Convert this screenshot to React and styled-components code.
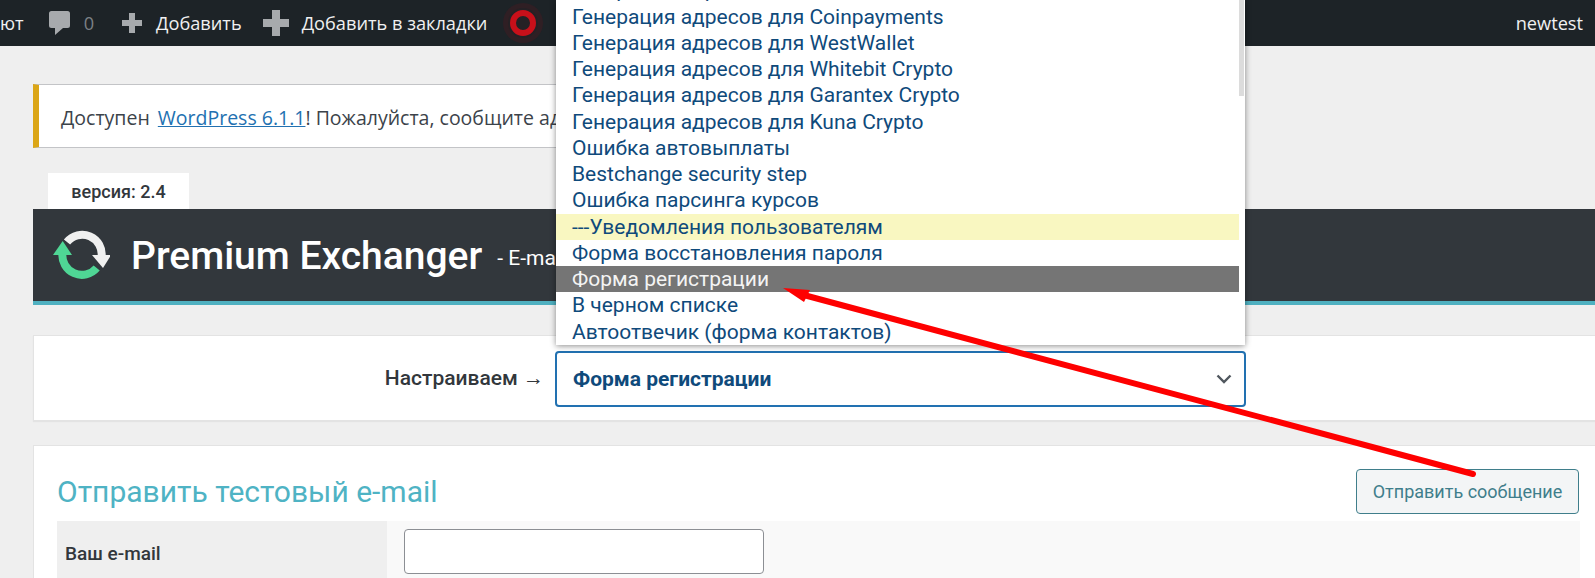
import React from "react";
import styled, { createGlobalStyle } from "styled-components";

const GlobalStyle = createGlobalStyle`
  html, body {
    margin: 0;
    height: 578px;
    overflow: hidden;
    background: #efefef;
  }
  * { box-sizing: border-box; }
`;

const Page = styled.div`
  position: relative;
  width: 1595px;
  height: 578px;
  overflow: hidden;
  font-family: Roboto, sans-serif;
`;

const AdminBar = styled.header`
  height: 46px;
  background: #1d2327;
  display: flex;
  align-items: center;
  font-family: "Open Sans", sans-serif;
  font-size: 18.2px;
  color: #f0f0f1;
`;

const BarItem = styled.span`
  display: flex;
  align-items: center;
  margin-left: ${({ $left }) => $left}px;
  color: ${({ $muted }) => ($muted ? "#7b8085" : "#f0f0f1")};
  white-space: nowrap;
`;

const BarUser = styled.span`
  margin-left: auto;
  margin-right: 12px;
`;

const Content = styled.main`
  padding-left: 33px;
`;

const Notice = styled.div`
  width: 1000px;
  height: 64px;
  margin-top: 38px;
  display: flex;
  align-items: center;
  padding: 2px 0 0 22px;
  background: #fff;
  border: 1px solid #c3c4c7;
  border-left: 6px solid #dba617;
  font-family: "Open Sans", sans-serif;
  font-size: 19.5px;
  color: #3c434a;
  white-space: pre;

  a {
    color: #2271b1;
    text-decoration: underline;
    margin-left: 3px;
  }
`;

const VersionTab = styled.div`
  width: 141px;
  height: 36px;
  margin: 25px 0 0 15px;
  display: flex;
  align-items: center;
  justify-content: center;
  background: #fff;
  font-size: 18px;
  font-weight: 500;
  color: #32373c;
`;

const Banner = styled.div`
  height: 96px;
  display: flex;
  align-items: center;
  padding: 2px 0 0 17px;
  background: #32373c;
  border-bottom: 4px solid #4fb0c0;
  color: #fff;
`;

const Title = styled.h1`
  margin: 0 0 0 21px;
  font-size: 39px;
  font-weight: 500;
  white-space: nowrap;
`;

const Subtitle = styled.span`
  margin-left: 15px;
  padding-top: 4px;
  font-size: 21px;
  white-space: nowrap;
`;

const SelectPanel = styled.section`
  height: 86px;
  margin-top: 30px;
  padding-top: 15px;
  display: flex;
  background: #fff;
  border: 1px solid #e3e3e3;
  border-right: 0;
  box-shadow: 0 1px 1px #e3e3e3;
`;

const SelectLabel = styled.label`
  width: 521px;
  padding: 15px 11px 0 0;
  text-align: right;
  font-size: 21px;
  font-weight: 500;
  color: #32373c;
`;

const SelectBox = styled.div`
  width: 691px;
  height: 56px;
  padding: 0 12px 0 16px;
  display: flex;
  align-items: center;
  justify-content: space-between;
  border: 2px solid #2271b1;
  border-radius: 4px;
  font-size: 21px;
  font-weight: 700;
  color: #0f4a7b;
`;

const Card = styled.section`
  height: 200px;
  margin-top: 24px;
  padding: 23px 15px 0 23px;
  background: #fff;
  border: 1px solid #e3e3e3;
  border-right: 0;
`;

const CardHead = styled.div`
  display: flex;
  align-items: center;
  justify-content: space-between;
`;

const CardTitle = styled.h2`
  margin: 0;
  font-size: 30px;
  font-weight: 400;
  color: #4fb3c4;
`;

const SendButton = styled.button`
  width: 223px;
  height: 45px;
  margin-right: 1px;
  padding: 0;
  background: #f3f5f6;
  border: 1px solid #3f7e8b;
  border-radius: 4px;
  font-family: Roboto, sans-serif;
  font-size: 18px;
  color: #3f7e8b;
`;

const FieldRow = styled.div`
  margin-top: 7px;
  display: grid;
  grid-template-columns: 330px 1fr;
  height: 70px;
`;

const FieldLabel = styled.div`
  padding: 21px 0 0 8px;
  background: #efefef;
  font-size: 19px;
  font-weight: 500;
  color: #32373c;
`;

const FieldValue = styled.div`
  padding: 8px 17px;
  background: #f9f9f9;
`;

const TextInput = styled.input`
  display: block;
  width: 360px;
  height: 45px;
  background: #fff;
  border: 1px solid #8c8f94;
  border-radius: 4px;
`;

const Dropdown = styled.div`
  position: absolute;
  top: 0;
  left: 556px;
  width: 689px;
  height: 345px;
  overflow: hidden;
  background: #fff;
  box-shadow: 0 1px 6px rgba(0, 0, 0, 0.45);
`;

const OptionList = styled.ul`
  margin: -22.6px 6px 0 0;
  padding: 0;
  list-style: none;
`;

const Option = styled.li`
  height: 26.25px;
  padding-left: 16px;
  font-size: 21px;
  line-height: 26px;
  white-space: nowrap;
  color: ${({ $kind }) => ($kind === "active" ? "#f4f4f4" : "#0f4a7b")};
  background: ${({ $kind }) =>
    $kind === "active" ? "#757575" : $kind === "group" ? "#f9f7c1" : "transparent"};
`;

const ScrollThumb = styled.div`
  position: absolute;
  top: 0;
  right: 1px;
  width: 5px;
  height: 96px;
  background: #dcdcdc;
`;

const ArrowLayer = styled.svg`
  position: absolute;
  top: 0;
  left: 0;
  pointer-events: none;
`;

const options = [
  { text: "Генерация адресов для" },
  { text: "Генерация адресов для Coinpayments" },
  { text: "Генерация адресов для WestWallet" },
  { text: "Генерация адресов для Whitebit Crypto" },
  { text: "Генерация адресов для Garantex Crypto" },
  { text: "Генерация адресов для Kuna Crypto" },
  { text: "Ошибка автовыплаты" },
  { text: "Bestchange security step" },
  { text: "Ошибка парсинга курсов" },
  { text: "---Уведомления пользователям", kind: "group" },
  { text: "Форма восстановления пароля" },
  { text: "Форма регистрации", kind: "active" },
  { text: "В черном списке" },
  { text: "Автоотвечик (форма контактов)" },
];

const CommentIcon = () => (
  <svg width="21" height="24" viewBox="0 0 21 24">
    <path fill="#a7aaad" d="M2.5 0h16A2.5 2.5 0 0 1 21 2.5v12a2.5 2.5 0 0 1-2.5 2.5H14l-8 7v-7H2.5A2.5 2.5 0 0 1 0 14.5v-12A2.5 2.5 0 0 1 2.5 0z" />
  </svg>
);

const PlusIcon = ({ size, bar }) => (
  <svg width={size} height={size} viewBox={`0 0 ${size} ${size}`}>
    <path
      fill="#a7aaad"
      d={`M${(size - bar) / 2} 0h${bar}v${(size - bar) / 2}h${(size - bar) / 2}v${bar}h-${(size - bar) / 2}v${(size - bar) / 2}h-${bar}v-${(size - bar) / 2}h-${(size - bar) / 2}v-${bar}h${(size - bar) / 2}z`}
    />
  </svg>
);

const RecordIcon = () => (
  <svg width="42" height="42" viewBox="0 0 42 42">
    <circle cx="21" cy="21" r="20" fill="#4a1a20" opacity="0.4" />
    <circle cx="21" cy="21" r="15" fill="#1d2327" opacity="0.55" />
    <circle cx="21" cy="21" r="10" fill="none" stroke="#c8101a" strokeWidth="6" />
  </svg>
);

const SyncLogo = () => (
  <svg width="60" height="60" viewBox="0 0 60 60">
    <path d="M12.5 27A19.5 19.5 0 0 0 46.7 42" fill="none" stroke="#4fd695" strokeWidth="8" />
    <path d="M12.7 15L22 29H3z" fill="#4fd695" />
    <path d="M17 16A19.5 19.5 0 0 1 51.5 31" fill="none" stroke="#f0f0f0" strokeWidth="8" />
    <path d="M53 42L42 29h19z" fill="#f0f0f0" />
  </svg>
);

const Chevron = () => (
  <svg width="16" height="10" viewBox="0 0 16 10">
    <path d="M1.5 1.5L8 8l6.5-6.5" fill="none" stroke="#50575e" strokeWidth="2.4" />
  </svg>
);

export default function App() {
  return (
    <Page>
      <GlobalStyle />
      <AdminBar>
        <BarItem $left={0}>ют</BarItem>
        <BarItem $left={25}><CommentIcon /></BarItem>
        <BarItem $left={14} $muted>0</BarItem>
        <BarItem $left={28}><PlusIcon size={20} bar={6} /></BarItem>
        <BarItem $left={14}>Добавить</BarItem>
        <BarItem $left={21}><PlusIcon size={26} bar={8} /></BarItem>
        <BarItem $left={13}>Добавить в закладки</BarItem>
        <BarItem $left={15}><RecordIcon /></BarItem>
        <BarUser>newtest</BarUser>
      </AdminBar>

      <Content>
        <Notice>
          Доступен <a href="#wp">WordPress 6.1.1</a>! Пожалуйста, сообщите администратору сайта.
        </Notice>

        <VersionTab>версия: 2.4</VersionTab>
        <Banner>
          <SyncLogo />
          <Title>Premium Exchanger</Title>
          <Subtitle>- E-mail шаблоны</Subtitle>
        </Banner>

        <SelectPanel>
          <SelectLabel>Настраиваем →</SelectLabel>
          <SelectBox>
            Форма регистрации
            <Chevron />
          </SelectBox>
        </SelectPanel>

        <Card>
          <CardHead>
            <CardTitle>Отправить тестовый e-mail</CardTitle>
            <SendButton>Отправить сообщение</SendButton>
          </CardHead>
          <FieldRow>
            <FieldLabel>Ваш e-mail</FieldLabel>
            <FieldValue>
              <TextInput />
            </FieldValue>
          </FieldRow>
        </Card>
      </Content>

      <Dropdown>
        <OptionList>
          {options.map((o) => (
            <Option key={o.text} $kind={o.kind}>{o.text}</Option>
          ))}
        </OptionList>
        <ScrollThumb />
      </Dropdown>

      <ArrowLayer width="1595" height="578" viewBox="0 0 1595 578">
        <path d="M800 294L1473 474" stroke="#fe0000" strokeWidth="6" strokeLinecap="round" />
        <path d="M783 288L810 290L804 302z" fill="#fe0000" />
      </ArrowLayer>
    </Page>
  );
}
